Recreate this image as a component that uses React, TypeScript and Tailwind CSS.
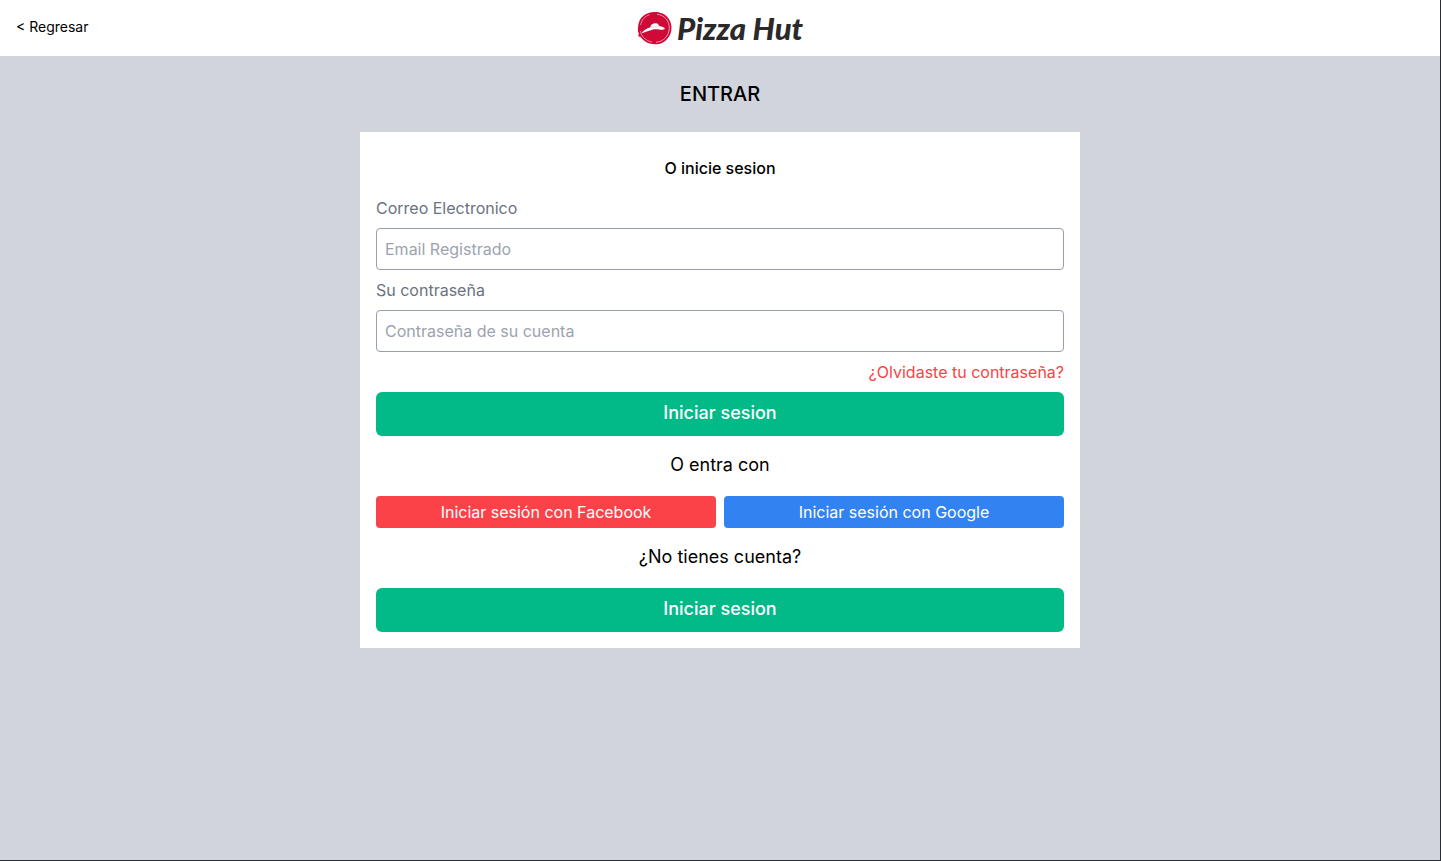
import React from "react";

function Emblem() {
  return (
    <svg viewBox="0 0 36 34" className="h-[34px] w-9 shrink-0" aria-hidden="true">
      <path
        d="M18 1C23 .8 28 3 31 6.800 34 10.500 35 15 34.300 19.500 33.300 25 30 29.500 25.500 31.700 21 33.800 14.500 33.700 10 31.500 7 30 4.800 28 3.300 25.800L1.300 25.500 1.800 22.500 1 20.500C.8 15 1.500 9.800 5 6 8.300 2.600 13 1.100 18 1Z"
        fill="#d00a37"
      />
      <path
        d="M20 3.200C27.500 4.200 32.600 10 32.300 17.300 32 25 26.500 30.700 19 31.300"
        fill="none"
        stroke="#f0a9b8"
        strokeWidth="0.900"
      />
      <path d="M15 31C8.500 29.800 4.200 25.500 3.400 20M3.600 14C4.500 9 8 5.200 12.500 3.700" fill="none" stroke="#f0a9b8" strokeWidth="0.800" />
      <path
        d="M4.300 22.600C6.500 19.200 10 17.200 13.300 16.200L14.200 13.700 17.300 12.300 20.500 12.400 22.300 14.900C25 15.300 27 16.100 28 17.700 26.500 18.900 24.500 18.800 22.300 18.500 19.500 18.200 17.500 18 15.300 18.700 11.500 19.700 8 21.200 4.300 22.600Z"
        fill="#fff"
      />
      <path d="M13.600 16.500C16.500 15.700 19.600 15.500 22.300 16" fill="none" stroke="#f3c3cd" strokeWidth="0.600" />
    </svg>
  );
}

type FieldProps = { id: string; label: string; type: string; placeholder: string };

function Field({ id, label, type, placeholder }: FieldProps) {
  return (
    <div className="flex flex-col gap-2">
      <label htmlFor={id} className="text-[#6b7280]">
        {label}
      </label>
      <input
        id={id}
        type={type}
        placeholder={placeholder}
        className="w-full rounded border border-[#979fae] p-2 placeholder:text-[#9ca3af]"
      />
    </div>
  );
}

function PrimaryButton({ type }: { type: "submit" | "button" }) {
  return (
    <button type={type} className="w-full rounded-md bg-[#02ba87] px-2 pt-[7px] pb-[9px] text-lg font-medium text-white">
      Iniciar sesion
    </button>
  );
}

function Divider({ children }: { children: React.ReactNode }) {
  return <p className="pt-[15px] pb-[17px] text-center text-lg">{children}</p>;
}

export default function App() {
  return (
    <div className="min-h-screen border-r border-b border-[#292d31] bg-[#d1d4dc] font-['Inter',sans-serif] text-black">
      <header className="grid h-14 grid-cols-3 items-center bg-white px-4">
        <a href="#regresar" className="pb-0.5 text-sm">
          &lt; Regresar
        </a>
        <div className="flex items-center justify-center gap-1">
          <Emblem />
          <span className="font-['Lato',sans-serif] text-[31px] leading-8 font-black whitespace-nowrap text-[#2b292a] italic">
            Pizza Hut
          </span>
        </div>
      </header>

      <main className="px-4 pb-6">
        <h1 className="py-6 text-center text-xl font-medium">ENTRAR</h1>
        <form className="mx-auto max-w-[720px] bg-white p-4" onSubmit={(e) => e.preventDefault()}>
          <h2 className="pt-2 pb-4 text-center font-medium">O inicie sesion</h2>
          <div className="flex flex-col gap-2">
            <Field id="email" label="Correo Electronico" type="email" placeholder="Email Registrado" />
            <Field id="password" label="Su contraseña" type="password" placeholder="Contraseña de su cuenta" />
            <a href="#recuperar" className="self-end text-[#f94348]">
              ¿Olvidaste tu contraseña?
            </a>
            <PrimaryButton type="submit" />
          </div>
          <Divider>O entra con</Divider>
          <div className="grid grid-cols-2 gap-2 text-white">
            <button type="button" className="rounded bg-[#fb4249] px-2 py-1">
              Iniciar sesión con Facebook
            </button>
            <button type="button" className="rounded bg-[#3283f1] px-2 py-1">
              Iniciar sesión con Google
            </button>
          </div>
          <Divider>¿No tienes cuenta?</Divider>
          <PrimaryButton type="button" />
        </form>
      </main>
    </div>
  );
}
